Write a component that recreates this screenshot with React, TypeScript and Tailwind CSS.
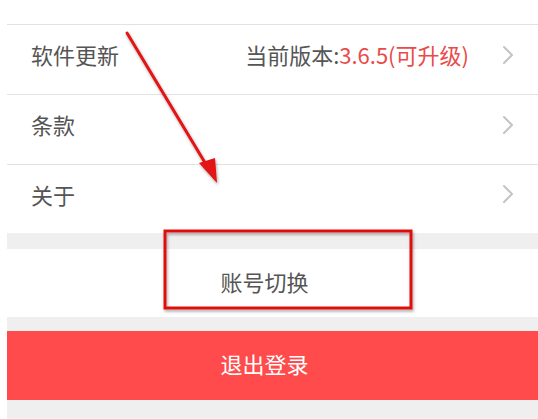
import React from "react";

const Chevron = () => (
  <svg width="12" height="20" viewBox="0 0 12 20" fill="none">
    <path d="M2 2 L10 10 L2 18" stroke="#c4c4c4" strokeWidth="2" strokeLinecap="round" strokeLinejoin="round" />
  </svg>
);

const Row = ({ label, right, h }: { label: string; right?: React.ReactNode; h: string }) => (
  <div className={`flex items-center justify-between border-t border-[#e2e2e2] pl-[24px] pr-[24px] pb-[10px] ${h}`}>
    <span className="text-[22px] text-[#555555]">{label}</span>
    <div className="flex items-center gap-[33px]">
      {right}
      <Chevron />
    </div>
  </div>
);

export default function App() {
  return (
    <div
      className="relative w-[538px] h-[419px] overflow-hidden bg-white pl-[7px] pt-[24px]"
      style={{ fontFamily: '"Noto Sans CJK SC", "Noto Sans", sans-serif' }}
    >
      <Row
        label="软件更新"
        h="h-[70px]"
        right={
          <span className="text-[22px] text-[#555555]">
            当前版本:<span className="text-[#ea4a4a]">3.6.5(可升级)</span>
          </span>
        }
      />
      <Row label="条款" h="h-[70px]" />
      <Row label="关于" h="h-[69px]" />
      <div className="h-[16px] bg-[#efefef]" />
      <div className="flex h-[68px] items-center justify-center pr-[16px] pb-[4px] text-[22px] text-[#555555]">
        账号切换
      </div>
      <div className="h-[14px] bg-[#efefef]" />
      <div className="flex h-[69px] items-center justify-center bg-[#ff4b4b] pr-[16px] pb-[4px] text-[22px] text-white">
        退出登录
      </div>
      <div className="h-[30px] bg-[#efefef]" />

      <svg className="pointer-events-none absolute left-0 top-0" width="538" height="419" viewBox="0 0 538 419">
        <defs>
          <filter id="sh" x="-20%" y="-20%" width="140%" height="140%">
            <feDropShadow dx="1" dy="2" stdDeviation="1.5" floodColor="#000" floodOpacity="0.35" />
          </filter>
        </defs>
        <g filter="url(#sh)">
          <line x1="127" y1="33" x2="207" y2="166" stroke="#e21212" strokeWidth="3" strokeLinecap="round" />
          <polygon points="217,183 199,163 215,158" fill="#e21212" />
          <rect x="165" y="231" width="246" height="77" fill="none" stroke="#e01010" strokeWidth="3" />
        </g>
      </svg>
    </div>
  );
}
